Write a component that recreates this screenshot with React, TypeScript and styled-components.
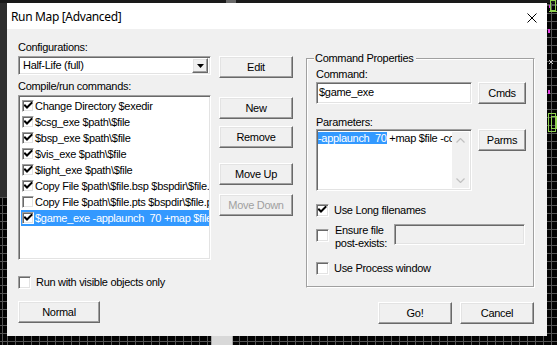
import React from 'react';
import styled, { createGlobalStyle, css } from 'styled-components';

const Global = createGlobalStyle`
  html, body { margin: 0; padding: 0; background: #000; }
  body { font-family: "Liberation Sans", Arial, sans-serif; font-size: 11px; letter-spacing: -0.3px; color: #000; }
  * { box-sizing: border-box; }
`;

const Desktop = styled.div`
  position: relative;
  width: 557px;
  height: 345px;
  overflow: hidden;
  background-color: #030303;
  background-image:
    repeating-linear-gradient(to right, #555 0 1px, transparent 1px 8px),
    repeating-linear-gradient(to bottom, #555 0 1px, transparent 1px 8px);
  background-position: 7px 5px;
  padding: 3px 0 0 7px;
`;

const MapLayer = styled.svg`
  position: absolute;
  left: 0;
  top: 0;
  width: 557px;
  height: 345px;
  pointer-events: none;
`;

const Window = styled.div`
  position: relative;
  width: 540px;
  height: 333px;
  background: #f0f0f0;
  display: flex;
  flex-direction: column;
`;

const TitleBar = styled.div`
  height: 26px;
  background: #fff;
  display: flex;
  align-items: center;
  justify-content: space-between;
  padding: 1px 10px 0 4px;
  flex: none;
`;

const TitleText = styled.span`
  font-family: "Noto Sans", "Liberation Sans", sans-serif;
  font-size: 12px;
  letter-spacing: -0.35px;
  color: #000;
`;

const CloseIcon = styled.svg`
  width: 10px;
  height: 10px;
  margin-top: 2px;
`;

const Body = styled.div`
  display: flex;
  gap: 13px;
  padding: 0 12px 0 11px;
  flex: 1;
`;

const LeftArea = styled.div`
  width: 275px;
  display: flex;
  flex-direction: column;
`;

const RightArea = styled.div`
  width: 229px;
  display: flex;
  flex-direction: column;
`;

const Label = styled.div<{ $mt?: number }>`
  line-height: 13px;
  height: 13px;
  margin-top: ${p => p.$mt ?? 0}px;
  white-space: nowrap;
`;

const Row = styled.div<{ $mt?: number; $gap?: number }>`
  display: flex;
  align-items: flex-start;
  gap: ${p => p.$gap ?? 8}px;
  margin-top: ${p => p.$mt ?? 0}px;
`;

const raised = css`
  border-style: solid;
  border-width: 1px;
  border-color: #fff #696969 #696969 #fff;
  box-shadow: inset -1px -1px #a0a0a0, inset 1px 1px #e3e3e3;
`;

const sunken = css`
  border-style: solid;
  border-width: 1px;
  border-color: #a0a0a0 #fff #fff #a0a0a0;
  box-shadow: inset 1px 1px #696969, inset -1px -1px #e3e3e3;
`;

const Button = styled.button<{ $w?: number; $mt?: number; $disabled?: boolean }>`
  ${raised};
  width: ${p => p.$w ?? 74}px;
  height: 22px;
  margin: ${p => p.$mt ?? 0}px 0 0 0;
  padding: 0;
  background: #f0f0f0;
  font-family: "Liberation Sans", Arial, sans-serif;
  font-size: 11px;
  letter-spacing: -0.3px;
  color: ${p => (p.$disabled ? '#a0a0a0' : '#000')};
  flex: none;
  text-align: center;
`;

const Combo = styled.div`
  ${sunken};
  width: 193px;
  height: 19px;
  background: #fff;
  display: flex;
  align-items: center;
  padding: 2px 2px 2px 4px;
  justify-content: space-between;
`;

const ComboText = styled.span`
  line-height: 13px;
`;

const ComboButton = styled.div`
  ${raised};
  width: 16px;
  height: 15px;
  background: #f0f0f0;
  display: flex;
  align-items: center;
  justify-content: center;
`;

const ListBox = styled.div`
  ${sunken};
  width: 193px;
  height: 165px;
  background: #fff;
  padding: 2px 1px 2px 2px;
  overflow: hidden;
  flex: none;
`;

const ListItem = styled.div<{ $selected?: boolean }>`
  height: 16px;
  display: flex;
  align-items: center;
  background: ${p => (p.$selected ? '#3399ff' : 'transparent')};
  color: ${p => (p.$selected ? '#fff' : '#000')};
  padding-left: 1px;
  white-space: pre;
  overflow: hidden;
`;

const ItemText = styled.span`
  margin-left: 1px;
  line-height: 13px;
  white-space: pre;
`;

const ButtonColumn = styled.div`
  display: flex;
  flex-direction: column;
  padding-top: 2px;
`;

const Box = styled.span<{ $size?: number }>`
  ${sunken};
  width: ${p => p.$size ?? 13}px;
  height: ${p => p.$size ?? 13}px;
  background: #fff;
  display: inline-flex;
  align-items: center;
  justify-content: center;
  flex: none;
`;

const CheckRow = styled.div<{ $mt?: number; $gap?: number }>`
  display: flex;
  align-items: center;
  gap: ${p => p.$gap ?? 5}px;
  margin-top: ${p => p.$mt ?? 0}px;
  height: 13px;
  line-height: 13px;
  white-space: nowrap;
`;

const Group = styled.div`
  position: relative;
  margin-top: 29px;
  height: 230px;
  border: 1px solid #d5d5d5;
  border-color: #a0a0a0 #fff #fff #a0a0a0;
  box-shadow: inset -1px -1px #a0a0a0, inset 1px 1px #fff;
  padding: 9px 0 0 9px;
  display: flex;
  flex-direction: column;
`;

const Legend = styled.span`
  position: absolute;
  top: -7px;
  left: 7px;
  padding: 0 2px 0 1px;
  background: #f0f0f0;
  line-height: 13px;
`;

const TextInput = styled.div<{ $w: number; $h: number; $disabled?: boolean }>`
  ${sunken};
  width: ${p => p.$w}px;
  height: ${p => p.$h}px;
  background: ${p => (p.$disabled ? '#f0f0f0' : '#fff')};
  padding: 3px 0 0 2px;
  line-height: 13px;
  white-space: pre;
  overflow: hidden;
  flex: none;
`;

const TextArea = styled.div`
  ${sunken};
  width: 156px;
  height: 62px;
  background: #fff;
  display: flex;
  flex: none;
  overflow: hidden;
`;

const TextAreaContent = styled.div`
  flex: 1;
  padding: 2px 0 0 1px;
  line-height: 13px;
  white-space: pre;
  overflow: hidden;
`;

const Highlight = styled.span`
  background: #3399ff;
  color: #fff;
`;

const ScrollBar = styled.div`
  width: 17px;
  background: #f0f0f0;
  display: flex;
  flex-direction: column;
  justify-content: space-between;
  align-items: center;
  padding: 6px 0 5px;
  margin: 2px 2px 2px 0;
`;

const EnsureRow = styled.div`
  display: flex;
  align-items: flex-start;
  margin-top: 7px;
`;

const EnsureBox = styled.span`
  display: flex;
  margin-top: 5px;
`;

const EnsureLabel = styled.div`
  width: 59px;
  margin-left: 6px;
  line-height: 13px;
`;

const Footer = styled.div`
  display: flex;
  justify-content: flex-end;
  gap: 8px;
  margin-top: 14px;
  padding-right: 1px;
`;

const Check: React.FC<{ checked?: boolean; size?: number }> = ({ checked, size = 13 }) => (
  <Box $size={size}>
    {checked && (
      <svg width="9" height="9" viewBox="0 0 9 9">
        <path d="M1 3.5 L3 5.5 L7.5 1" stroke="#000" strokeWidth="2" fill="none" strokeLinecap="square" />
      </svg>
    )}
  </Box>
);

const commands: { text: string; checked: boolean; selected?: boolean }[] = [
  { text: 'Change Directory $exedir', checked: true },
  { text: '$csg_exe $path\\$file', checked: true },
  { text: '$bsp_exe $path\\$file', checked: true },
  { text: '$vis_exe $path\\$file', checked: true },
  { text: '$light_exe $path\\$file', checked: true },
  { text: 'Copy File $path\\$file.bsp $bspdir\\$file.bsp', checked: true },
  { text: 'Copy File $path\\$file.pts $bspdir\\$file.pts', checked: false },
  { text: '$game_exe -applaunch  70 +map $file', checked: true, selected: true },
];

export default function App() {
  return (
    <>
      <Global />
      <Desktop>
        <MapLayer viewBox="0 0 557 345">
          <rect x="0" y="0" width="7" height="197" fill="#2e2e2e" />
          <rect x="0" y="0" width="557" height="3" fill="#1a1a1a" />
          <rect x="226" y="0" width="10" height="3" fill="#6a6a6a" />
          <rect x="211" y="336" width="22" height="9" fill="#d8d8d8" />
          <rect x="211" y="336" width="1" height="9" fill="#a8a8a8" />
          <rect x="232" y="336" width="1" height="9" fill="#a8a8a8" />
          <g stroke="#8fd14f" strokeWidth="1" fill="none">
            <rect x="550.5" y="0.5" width="5" height="10" />
            <path d="M549 11.5 H557" />
            <rect x="548.5" y="113.5" width="7" height="18" />
            <rect x="551.5" y="116.5" width="5" height="12" />
          </g>
          <g fill="#e040e0">
            <rect x="548" y="29" width="2" height="4" />
            <rect x="548" y="90" width="2" height="4" />
            <rect x="549" y="5" width="1" height="3" />
          </g>
          <g stroke="#c8c8c8" strokeWidth="1">
            <path d="M549 60 L553 64 M553 60 L549 64" />
          </g>
        </MapLayer>
        <Window>
          <TitleBar>
            <TitleText>Run Map [Advanced]</TitleText>
            <CloseIcon viewBox="0 0 10 10">
              <path d="M0.5 0.5 L9.5 9.5 M9.5 0.5 L0.5 9.5" stroke="#000" strokeWidth="1" />
            </CloseIcon>
          </TitleBar>
          <Body>
            <LeftArea>
              <Label $mt={12}>Configurations:</Label>
              <Row $mt={2}>
                <Combo>
                  <ComboText>Half-Life (full)</ComboText>
                  <ComboButton>
                    <svg width="7" height="4" viewBox="0 0 7 4">
                      <path d="M0 0 H7 L3.5 4 Z" fill="#000" />
                    </svg>
                  </ComboButton>
                </Combo>
                <Button>Edit</Button>
              </Row>
              <Label $mt={2}>Compile/run commands:</Label>
              <Row $mt={2}>
                <ListBox>
                  {commands.map((c, i) => (
                    <ListItem key={i} $selected={c.selected}>
                      <Check checked={c.checked} size={12} />
                      <ItemText>{c.text}</ItemText>
                    </ListItem>
                  ))}
                </ListBox>
                <ButtonColumn>
                  <Button>New</Button>
                  <Button $mt={7}>Remove</Button>
                  <Button $mt={15}>Move Up</Button>
                  <Button $mt={9} $disabled>Move Down</Button>
                </ButtonColumn>
              </Row>
              <CheckRow $mt={16} $gap={5}>
                <Check />
                <span>Run with visible objects only</span>
              </CheckRow>
              <Button $w={82} $mt={12}>Normal</Button>
            </LeftArea>
            <RightArea>
              <Group>
                <Legend>Command Properties</Legend>
                <Label>Command:</Label>
                <Row $mt={1} $gap={6}>
                  <TextInput $w={156} $h={22}>$game_exe</TextInput>
                  <Button $w={48}>Cmds</Button>
                </Row>
                <Label $mt={12}>Parameters:</Label>
                <Row $gap={6}>
                  <TextArea>
                    <TextAreaContent>
                      <Highlight>-applaunch  70</Highlight> +map $file -console
                    </TextAreaContent>
                    <ScrollBar>
                      <svg width="9" height="5" viewBox="0 0 9 5">
                        <path d="M0.5 4.5 L4.5 0.5 L8.5 4.5" stroke="#c0c0c0" strokeWidth="1.2" fill="none" />
                      </svg>
                      <svg width="9" height="5" viewBox="0 0 9 5">
                        <path d="M0.5 0.5 L4.5 4.5 L8.5 0.5" stroke="#c0c0c0" strokeWidth="1.2" fill="none" />
                      </svg>
                    </ScrollBar>
                  </TextArea>
                  <Button $w={48}>Parms</Button>
                </Row>
                <CheckRow $mt={13}>
                  <Check checked />
                  <span>Use Long filenames</span>
                </CheckRow>
                <EnsureRow>
                  <EnsureBox>
                    <Check />
                  </EnsureBox>
                  <EnsureLabel>
                    Ensure file
                    <br />
                    post-exists:
                  </EnsureLabel>
                  <TextInput $w={131} $h={21} $disabled />
                </EnsureRow>
                <CheckRow $mt={12}>
                  <Check />
                  <span>Use Process window</span>
                </CheckRow>
              </Group>
              <Footer>
                <Button>Go!</Button>
                <Button>Cancel</Button>
              </Footer>
            </RightArea>
          </Body>
        </Window>
      </Desktop>
    </>
  );
}
